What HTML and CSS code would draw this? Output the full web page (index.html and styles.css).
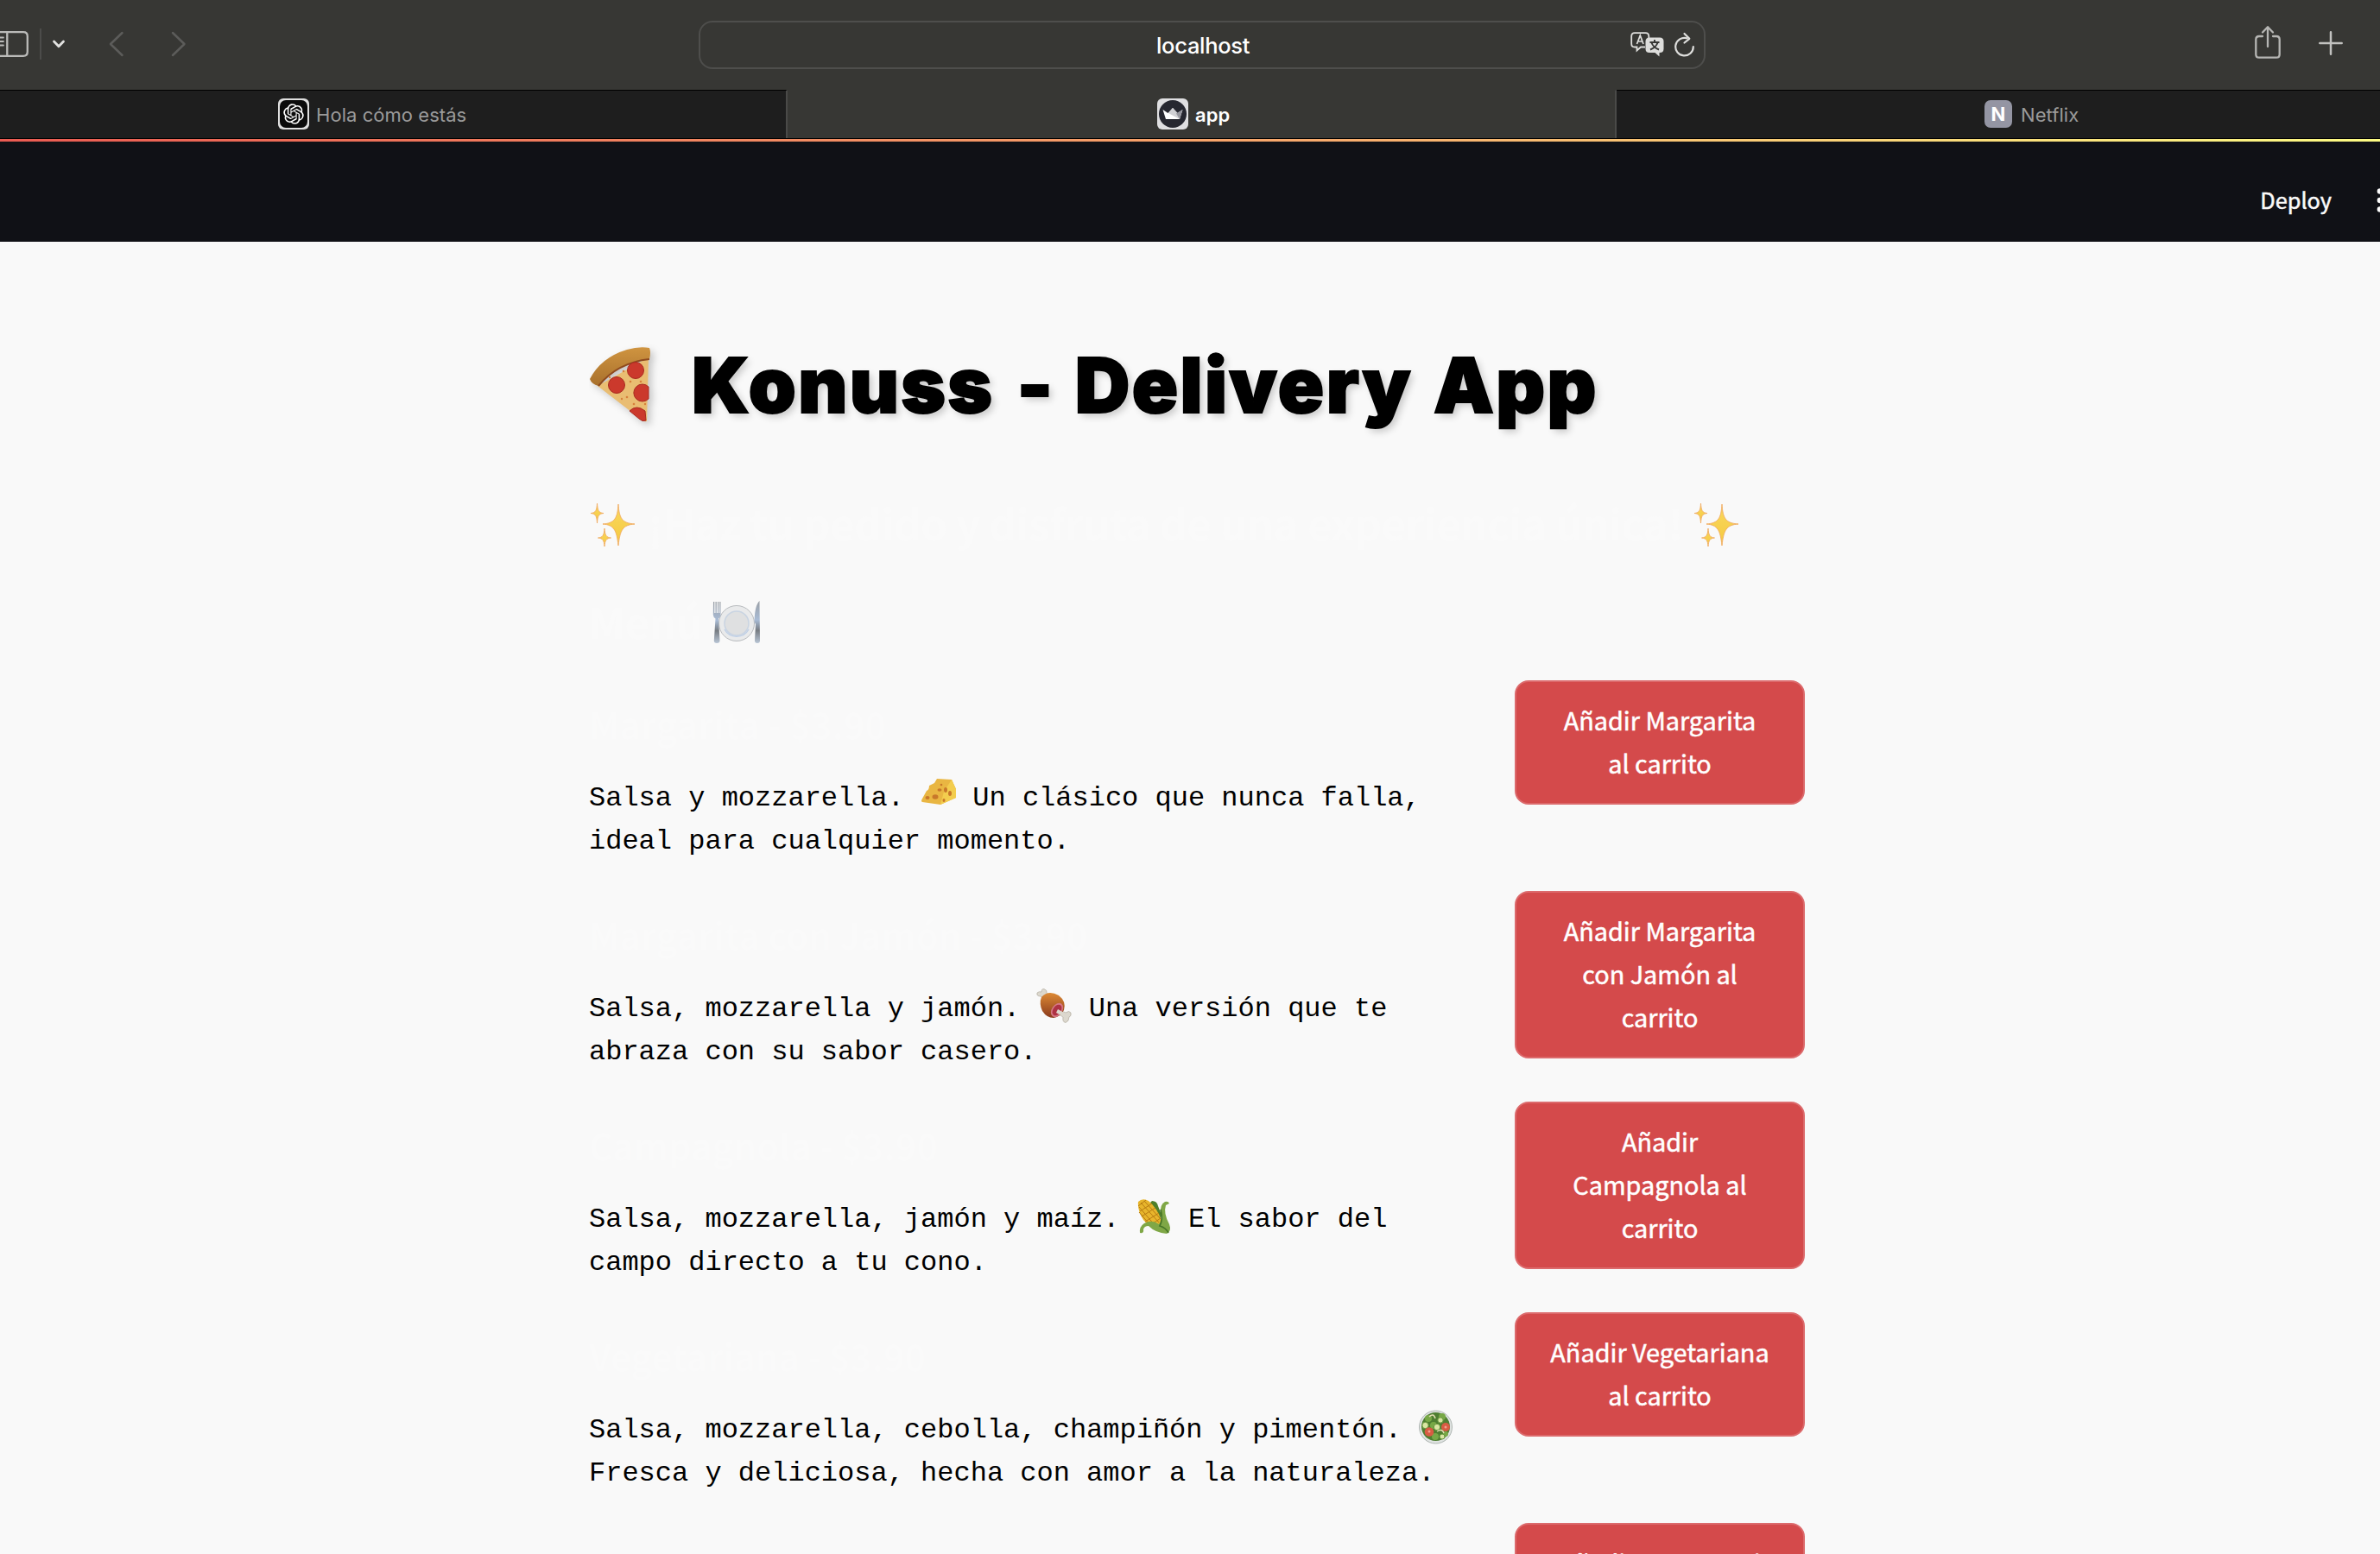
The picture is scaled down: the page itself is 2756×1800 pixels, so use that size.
FILE: index.html
```
<!DOCTYPE html>
<html lang="es">
<head>
<meta charset="utf-8">
<title>app</title>
<link rel="stylesheet" href="styles.css">
</head>
<body>
<svg width="0" height="0" class="defs" aria-hidden="true">
  <defs>
    <linearGradient id="gold" x1="0" y1="0" x2="0" y2="1"><stop offset="0" stop-color="#f9d85e"/><stop offset="1" stop-color="#f5c93f"/></linearGradient>
    <linearGradient id="crust" x1="0" y1="0" x2="0" y2="1"><stop offset="0" stop-color="#cf9440"/><stop offset="1" stop-color="#a8702c"/></linearGradient>
    <linearGradient id="steel" x1="0" y1="0" x2="0" y2="1"><stop offset="0" stop-color="#9a9fa5"/><stop offset=".45" stop-color="#a9bcd6"/><stop offset=".7" stop-color="#777c82"/><stop offset="1" stop-color="#b9c6d6"/></linearGradient>
    <linearGradient id="meat" x1="0" y1="0" x2="0" y2="1"><stop offset="0" stop-color="#dd8a35"/><stop offset="1" stop-color="#8a3a1c"/></linearGradient>
    <symbol id="sparkles" viewBox="0 0 52 50">
      <g fill="url(#gold)" stroke="#f0ab62" stroke-width=".9">
        <path d="M32 1C33 17 36 23 51 24C37 25 34 31 32 49C30 31 27 25 14 24C28 23 31 17 32 1Z"/>
        <path d="M7.500 0C8 8 9 11 15 11.500C9 12 8 15 7.500 23C7 15 6 12 0 11.500C6 11 7 8 7.500 0Z"/>
        <path d="M16 29C16.500 37 18 39.500 23.500 40C18 40.500 16.500 43 16 50C15.500 43 14 40.500 8.500 40C14 39.500 15.500 37 16 29Z"/>
      </g>
    </symbol>
  </defs>
</svg>

<header class="browser">
  <div class="toolbar">
    <div class="tools-left">
      <svg class="sidebar-icon" width="34" height="32" viewBox="0 0 34 32" fill="none" stroke="#babab8" stroke-width="2.300"><path d="M-4 2.200H27Q31.800 2.200 31.800 7V25Q31.800 29.800 27 29.800H-4M8.300 2V30"/><path d="M-2 8.500H4M-2 13H4M-2 17.500H4" stroke-width="1.800" stroke-linecap="round"/></svg>
      <span class="rule"></span>
      <svg class="chev-down" width="16" height="10" viewBox="0 0 16 10" fill="none" stroke="#e2e2e0" stroke-width="2.800" stroke-linecap="round" stroke-linejoin="round"><path d="M2.500 2L8 7.800L13.500 2"/></svg>
      <svg class="chev-back" width="18" height="30" viewBox="0 0 18 30" fill="none" stroke="#5c5c5a" stroke-width="2.500" stroke-linecap="round" stroke-linejoin="round"><path d="M15.500 2L2 15L15.500 28"/></svg>
      <svg class="chev-next" width="18" height="30" viewBox="0 0 18 30" fill="none" stroke="#5c5c5a" stroke-width="2.500" stroke-linecap="round" stroke-linejoin="round"><path d="M2 2L15.500 15L2 28"/></svg>
    </div>
    <div class="address">
      <span class="host">localhost</span>
      <svg class="translate" width="40" height="30" viewBox="0 0 40 30"><path d="M17 17.500H12L7.500 21.500V17.500H5Q1.200 17.500 1.200 13.500V5Q1.200 1.200 5 1.200H17.500Q21.300 1.200 21.300 5V7" fill="none" stroke="#dededc" stroke-width="1.800"/><path d="M7.500 14L11.300 4L15 14M8.800 11H14" fill="none" stroke="#dededc" stroke-width="1.700"/><path d="M22 6.500H34Q38.500 6.500 38.500 11V19.500Q38.500 24 34 24H33.500V28.500L28.500 24H22Q17.500 24 17.500 19.500V11Q17.500 6.500 22 6.500Z" fill="#dededc"/><path d="M28 9V12M22.500 12H33.500M31.500 12.500Q29.500 18 23 20.500M24.500 12.500Q26.500 18 33 20.500" fill="none" stroke="#373734" stroke-width="1.900"/></svg>
      <svg class="reload" width="24" height="30" viewBox="0 0 24 30" fill="none" stroke="#dededc" stroke-width="2.200" stroke-linecap="round" stroke-linejoin="round"><path d="M21.800 17A10.300 10.300 0 1 1 14.500 7.300"/><path d="M11.500 2L17.300 7.800L11.500 12.500"/></svg>
    </div>
    <div class="tools-right">
      <svg width="30" height="40" viewBox="0 0 30 40" fill="none" stroke="#b6b6b4" stroke-width="2.300" stroke-linecap="round" stroke-linejoin="round"><path d="M9 13H5Q1.300 13 1.300 16.700V34Q1.300 37.700 5 37.700H25Q28.700 37.700 28.700 34V16.700Q28.700 13 25 13H21"/><path d="M15 25V2.500M9 8.500L15 2.200L21 8.500"/></svg>
      <svg class="plus" width="28" height="28" viewBox="0 0 28 28" stroke="#c2c2c0" stroke-width="2.500" stroke-linecap="round"><path d="M14 1.300V26.700M1.300 14H26.700"/></svg>
    </div>
  </div>
  <nav class="tabs">
    <div class="tab">
      <svg width="36" height="36" viewBox="0 0 36 36"><rect width="36" height="36" rx="6" fill="#dfdfdf"/><rect x="2" y="2" width="32" height="32" rx="7" fill="#0b0b0b"/><g transform="translate(18 18) scale(.98) translate(-12 -12)" fill="#fff"><path d="M22.282 9.821a5.985 5.985 0 0 0-.516-4.910 6.046 6.046 0 0 0-6.510-2.900A6.065 6.065 0 0 0 4.981 4.182a5.985 5.985 0 0 0-3.998 2.900 6.046 6.046 0 0 0 .743 7.097 5.980 5.980 0 0 0 .510 4.911 6.051 6.051 0 0 0 6.515 2.900A5.985 5.985 0 0 0 13.260 24a6.056 6.056 0 0 0 5.772-4.206 5.990 5.990 0 0 0 3.998-2.900 6.056 6.056 0 0 0-.748-7.073zM13.260 22.430a4.476 4.476 0 0 1-2.876-1.040l.141-.081 4.779-2.758a.795.795 0 0 0 .393-.681v-6.737l2.020 1.169a.071.071 0 0 1 .038.052v5.583a4.504 4.504 0 0 1-4.495 4.493zM3.600 18.304a4.470 4.470 0 0 1-.535-3.014l.142.085 4.783 2.759a.771.771 0 0 0 .780 0l5.843-3.369v2.332a.080.080 0 0 1-.033.062L9.740 19.950a4.500 4.500 0 0 1-6.140-1.646zM2.341 7.896a4.485 4.485 0 0 1 2.365-1.973V11.600a.766.766 0 0 0 .388.676l5.814 3.355-2.020 1.168a.076.076 0 0 1-.071 0l-4.830-2.786A4.504 4.504 0 0 1 2.341 7.872zm16.596 3.856-5.833-3.387L15.119 7.200a.076.076 0 0 1 .071 0l4.830 2.791a4.494 4.494 0 0 1-.676 8.105v-5.678a.790.790 0 0 0-.407-.667zm2.011-3.023-.142-.085-4.773-2.782a.776.776 0 0 0-.785 0L9.409 9.230V6.897a.066.066 0 0 1 .028-.061l4.830-2.787a4.500 4.500 0 0 1 6.681 4.660zM8.307 12.863l-2.020-1.164a.080.080 0 0 1-.038-.057V6.074a4.500 4.500 0 0 1 7.376-3.453l-.142.081-4.778 2.758a.795.795 0 0 0-.393.681zm1.098-2.365 2.602-1.500 2.607 1.500v2.999l-2.597 1.500-2.607-1.500z"/></g></svg>
      <span class="tab-title">Hola cómo estás</span>
    </div>
    <div class="tab active">
      <svg width="36" height="36" viewBox="0 0 36 36"><rect width="36" height="36" rx="6" fill="#dfdfe1"/><circle cx="18" cy="18" r="16" fill="#262730"/><path d="M6.500 13L12.500 17L18 11L23.500 17L29.500 13L26 24H10Z" fill="#fff"/><path d="M18 11L23.500 17L26 24L13 17Z" fill="#d0d0d4"/><path d="M29.500 13L26 24L22 17.500Z" fill="#96969e"/></svg>
      <span class="tab-title">app</span>
    </div>
    <div class="tab">
      <span class="letter">N</span>
      <span class="tab-title">Netflix</span>
    </div>
  </nav>
</header>

<div class="decoration"></div>
<div class="app-header">
  <span class="deploy">Deploy</span>
  <svg class="dots" width="8" height="28" viewBox="0 0 8 28" fill="#fafafa"><circle cx="4" cy="3.500" r="3.300"/><circle cx="4" cy="14" r="3.300"/><circle cx="4" cy="24.500" r="3.300"/></svg>
</div>

<main class="page">
  <h1 class="title">
    <svg class="pizza" width="72" height="88" viewBox="0 0 72 88"><path d="M10 45L69 12L67 86Q63 87 58 82Z" fill="#e9bd72"/><path d="M1 37Q14 12 44 3Q58 -1 70 1Q72 6 70 14Q36 16 11 45Q3 43 1 37Z" fill="url(#crust)"/><path d="M11 45Q33 18 70 14" fill="none" stroke="#8f4a1e" stroke-width="2"/><g fill="#cb392c" stroke="#a92b20"><circle cx="54" cy="27" r="9.500"/><circle cx="32" cy="44" r="9.500"/><path d="M69 46A10 10 0 1 0 69 60Z"/><path d="M47 74Q55 66 65 74L66 85Q62 87 58 83Z"/></g><g fill="#d6803c"><circle cx="40" cy="28" r="1.300"/><circle cx="48" cy="40" r="1.300"/><circle cx="44" cy="58" r="1.300"/><circle cx="60" cy="40" r="1.300"/><circle cx="24" cy="35" r="1.200"/><circle cx="52" cy="66" r="1.300"/><circle cx="65" cy="66" r="1.200"/><circle cx="38" cy="60" r="1.200"/></g></svg>
    <span>Konuss</span><span class="dash">-</span><span class="delivery">Delivery</span><span class="app">App</span>
  </h1>
  <h2 class="tagline"><svg width="52" height="50"><use href="#sparkles"/></svg><span>¡Haz tu pedido y disfruta de una experiencia única!</span><svg width="52" height="50"><use href="#sparkles"/></svg></h2>
  <h2 class="menu-title"><span>Menú</span>
    <svg width="56" height="50" viewBox="0 0 56 50"><circle cx="28" cy="26" r="20.500" fill="#e9eaeb" stroke="#b9bcbf"/><circle cx="28" cy="26" r="14" fill="#dfe0e1" stroke="#c9d4e2" stroke-width="1.500"/><path d="M14 33A16 16 0 0 0 42 33" fill="none" stroke="#bfcfe6" stroke-width="1.500"/><path d="M1 1H2.300V14H3.500V1H4.800V14H6V1H7.200V14H8.300V1H9.500V17Q9 19 7 20.500L8.500 46Q8.500 49 5 49Q1.800 49 1.800 46L3.500 20.500Q1 19 .8 16Z" fill="url(#steel)"/><path d="M54.500 0Q49 5 48.500 24L50 27L49 46Q49 49 52 49Q55 49 55 46Z" fill="url(#steel)"/></svg>
  </h2>

  <section class="menu">
    <article class="item">
      <div class="info">
        <h3>Margarita - $3.90</h3>
        <p>Salsa y mozzarella. <svg class="emoji" width="41" height="40" viewBox="0 0 41 40"><path d="M19 1L36 2L41 13V23L23 31L2 28Q0 27 2 24L7 15Q10 14 10 9L16 6Z" fill="#e9b642"/><path d="M36 2L41 13V23L23 31L27 16Z" fill="#f3cd4e"/><g fill="#c8782a"><ellipse cx="8" cy="23" rx="2.500" ry="2"/><ellipse cx="17" cy="22" rx="3.500" ry="2.700"/><ellipse cx="22" cy="14" rx="2.500" ry="1.700"/><circle cx="24" cy="8" r="1.300"/><ellipse cx="29" cy="14" rx="2" ry="3"/><ellipse cx="34" cy="18" rx="2" ry="3"/><ellipse cx="27" cy="26" rx="1.500" ry="2"/></g></svg> Un clásico que nunca falla, ideal para cualquier momento.</p>
      </div>
      <button class="add">Añadir Margarita<br>al carrito</button>
    </article>
    <article class="item">
      <div class="info">
        <h3>Margarita con Jamón - $3.90</h3>
        <p>Salsa, mozzarella y jamón. <svg class="emoji" width="41" height="40" viewBox="0 0 41 40"><g fill="#dcd8ce" stroke="#aaa396" stroke-width=".6"><path d="M10 12L5 9Q0 9 1 5Q3 3 6 4Q6 0 9 .5Q13 2 12 5L15 9Z"/><path d="M25 24L34 28Q38 25 40 28Q41 32 38 33Q38 38 34 39.500Q30 39 31 33L23 28Z"/></g><path d="M6 10Q14 1 26 8Q35 15 32 25Q28 33 20 34Q12 34 7 26Q3 17 6 10Z" fill="url(#meat)"/><ellipse cx="24" cy="25" rx="6" ry="9" transform="rotate(35 24 25)" fill="#d67886"/><ellipse cx="24" cy="25" rx="4.500" ry="7" transform="rotate(35 24 25)" fill="#ae3244"/><path d="M25 24L34 29L32 33L23 28Z" fill="#dcd8ce"/></svg> Una versión que te abraza con su sabor casero.</p>
      </div>
      <button class="add">Añadir Margarita<br>con Jamón al<br>carrito</button>
    </article>
    <article class="item">
      <div class="info">
        <h3>Campagnola - $3.90</h3>
        <p>Salsa, mozzarella, jamón y maíz. <svg class="emoji" width="41" height="40" viewBox="0 0 41 40"><path d="M18 2Q24 2 25 8L29 18L25 30L8 22Q2 16 6 14Z" fill="#4e7f2b"/><path d="M2 3Q7 -2 14 2Q24 10 29 25L26 32Q14 32 8 24Q1 13 2 3Z" fill="#e7b52c"/><path d="M5 4L26 27M9 2L28 23M3 9L22 31M3 15L15 29M2 8L11 1M4 14L18 5M6 20L22 10M10 26L26 16M16 30L28 22" stroke="#b77c12" stroke-width="1" fill="none"/><path d="M38 5Q37 2 33 3Q27 6 28 17Q30 23 26 29Q18 23 9 28Q3 32 4 39Q9 40 8 35Q9 31 14 31Q22 39 35 40Q41 37 38 29Q31 16 34 7Z" fill="#7fa746"/><path d="M28 12Q31 24 27 31Q34 33 37 39" fill="none" stroke="#467526" stroke-width="1.700"/></svg> El sabor del campo directo a tu cono.</p>
      </div>
      <button class="add">Añadir<br>Campagnola al<br>carrito</button>
    </article>
    <article class="item">
      <div class="info">
        <h3>Vegetariana - $3.90</h3>
        <p>Salsa, mozzarella, cebolla, champiñón y pimentón. <svg class="emoji" width="41" height="40" viewBox="0 0 41 40"><circle cx="20.500" cy="20" r="19" fill="#dfe3e1" stroke="#aeb5b2"/><circle cx="20.500" cy="19.500" r="16.500" fill="#4e7e31"/><g fill="#77a846"><circle cx="12" cy="10" r="4"/><circle cx="28" cy="8" r="4"/><circle cx="20" cy="31" r="4"/><circle cx="32" cy="28" r="3"/><circle cx="18" cy="18" r="4"/></g><g fill="#d9e6a3" stroke="#629338"><circle cx="8.500" cy="18" r="3.700"/><circle cx="22" cy="20" r="3.700"/><circle cx="26" cy="12" r="3.200"/><circle cx="28" cy="31" r="3"/></g><g fill="#d85b43"><circle cx="13" cy="25.500" r="5.300"/><circle cx="32" cy="20" r="5"/></g><path d="M13 8Q18 3 20 10M22 25Q28 21 30 27" fill="none" stroke="#e4dfb4" stroke-width="1.500"/><g fill="#f1a08b"><circle cx="13" cy="25" r="1.500"/><circle cx="32" cy="20" r="1.500"/></g></svg> Fresca y deliciosa, hecha con amor a la naturaleza.</p>
      </div>
      <button class="add">Añadir Vegetariana<br>al carrito</button>
    </article>
    <article class="item">
      <div class="info"></div>
      <button class="add">Añadir Pepperoni<br>al carrito</button>
    </article>
  </section>
</main>
</body>
</html>
```
FILE: styles.css
```
* { box-sizing: border-box; margin: 0; }
html, body { height: 1800px; overflow: hidden; }
body { background: #f9f9f9; font-family: "Noto Sans CJK SC", "Noto Sans", sans-serif; }
svg { display: block; flex: none; }
.defs { position: absolute; }

.browser { font-family: Inter, "Liberation Sans", sans-serif; background: #373734; }
.toolbar { height: 104px; display: grid; grid-template-columns: 809px 1166px 1fr; }
.tools-left { display: flex; height: 102px; align-items: center; }
.rule { width: 2px; height: 36px; background: #4c4c4a; margin: 0 11px 0 12px; }
.chev-down { margin-left: 1px; }
.chev-back { margin-left: 50px; }
.chev-next { margin-left: 54px; }
.address { height: 56px; margin-top: 24px; border: 2px solid #4e4e4c; border-radius: 16px; display: flex; align-items: center; padding-right: 10px; }
.host { color: #fff; font-size: 25.500px; font-weight: 500; margin-left: 528px; margin-right: auto; letter-spacing: -.3px; }
.translate { margin-right: 11px; }
.tools-right { display: flex; padding: 29px 0 0 636px; gap: 44px; }
.plus { margin-top: 7px; }

.tabs { height: 57px; display: grid; grid-template-columns: 912px 960px 1fr; border-bottom: 1px solid #000; }
.tab { display: flex; align-items: center; background: #1e1e1e; border-top: 1px solid #000; color: #9a9a9a; font-size: 22px; padding-left: 322px; padding-bottom: 1px; gap: 8px; border-right: 2px solid #4a4a48; }
.tab.active { background: #373734; border-top-color: #373734; color: #fff; font-weight: 600; padding-left: 428px; }
.tab:last-child { padding-left: 426px; border-right: 0; gap: 10px; }
.tab-title { padding-top: 2px; letter-spacing: .05px; }
.letter { width: 32px; height: 32px; border-radius: 7px; background: #9495a3; color: #fff; font-weight: 700; font-size: 22px; line-height: 33px; text-align: center; }

.decoration { height: 3px; background: linear-gradient(90deg, #ea5b52, #f6a96c 55%, #fcfb84); }
.app-header { height: 116px; background: #101116; display: flex; justify-content: flex-end; padding-top: 50px; }
.deploy { color: #fafafa; font-size: 25.300px; line-height: 34px; margin-right: 52px; -webkit-text-stroke: .5px #fafafa; }
.dots { margin: 4px -4px 0 0; }

.page { width: 1410px; height: 1520px; overflow: hidden; margin-left: 682px; padding-top: 112px; }
.title { display: flex; height: 108px; line-height: 108px; font-family: Inter, "Liberation Sans", sans-serif; font-weight: 900; font-size: 88px; letter-spacing: 2.400px; color: #000; -webkit-text-stroke: 2px #000; text-shadow: 4px 4px 8px rgba(0,0,0,.2); }
.pizza { margin: 10px 47px 0 0; filter: drop-shadow(4px 4px 4px rgba(0,0,0,.2)); }
.dash { margin-left: 26px; }
.delivery { margin-left: 23px; }
.app { margin-left: 24px; }
.tagline, .menu-title { display: flex; height: 68px; line-height: 66px; font-size: 49px; font-weight: 700; letter-spacing: -.4px; color: #fafafa; white-space: nowrap; }
.tagline { margin-top: 72px; padding-left: 2px; width: 1332px; }
.tagline svg { margin-top: 11px; }
.tagline span { margin: 0 auto 0 14px; }
.menu-title { margin-top: 46px; }
.menu-title span { width: 143px; }
.menu-title svg { margin-top: 10px; }

.menu { margin-top: 34px; display: grid; gap: 32px; }
.item { height: 212px; display: grid; grid-template-columns: 1032px 336px; column-gap: 40px; align-items: start; }
.info { padding-top: 25px; }
.info h3 { height: 52px; line-height: 50px; font-size: 41.600px; font-weight: 700; color: #fafafa; }
.info p { margin-top: 34.500px; font-family: "Liberation Mono", monospace; font-size: 32px; line-height: 50px; color: #000; }
.emoji { display: inline-block; height: 40px; vertical-align: 0; margin: -8px 0; }
.add { width: 336px; font-family: inherit; font-size: 28.800px; line-height: 50px; color: #fff; -webkit-text-stroke: .5px #fff; background: #d44a4b; border: 2px solid #dc6a6c; border-radius: 16px; padding: 19px 28px 21px; }
```
